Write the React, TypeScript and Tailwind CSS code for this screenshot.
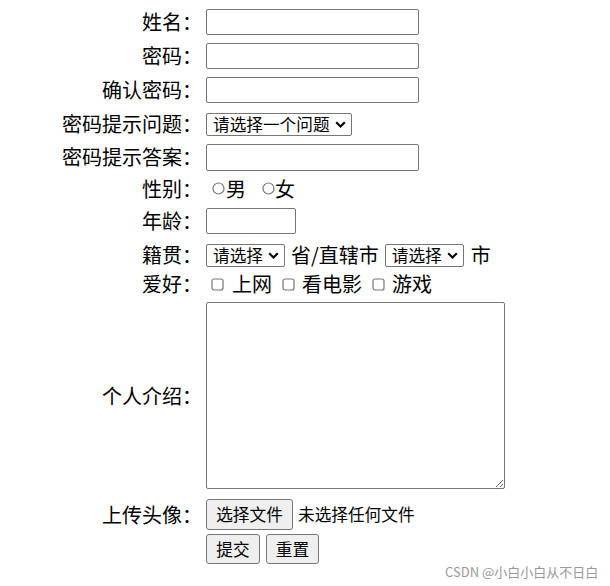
import React from "react";

function Chevron() {
  return (
    <svg width="11" height="7" viewBox="0 0 11 7" className="shrink-0">
      <path d="M1.2 1.2 L5.5 5.5 L9.8 1.2" fill="none" stroke="#000" strokeWidth="2.1" />
    </svg>
  );
}

function FakeSelect({ text }: { text: string }) {
  return (
    <div className="inline-flex h-[23px] items-center gap-[5px] rounded-[2px] border border-[#767676] bg-white pl-[6px] pr-[5px] text-[16.67px] leading-none">
      <span>{text}</span>
      <Chevron />
    </div>
  );
}

function Label({ children }: { children?: React.ReactNode }) {
  return (
    <div className="w-[202px] shrink-0 text-right text-[20px] leading-[26px]">
      {children}
    </div>
  );
}

function Radio() {
  return (
    <svg width="13" height="13" viewBox="0 0 13 13" className="block shrink-0">
      <circle cx="6.5" cy="6.5" r="5.5" fill="#fff" stroke="#767676" strokeWidth="1.2" />
    </svg>
  );
}

function Check() {
  return (
    <svg width="13" height="13" viewBox="0 0 13 13" className="block shrink-0">
      <rect x="1" y="1" width="11" height="11" rx="2" fill="#fff" stroke="#767676" strokeWidth="1.2" />
    </svg>
  );
}

const inputCls =
  "h-[26px] rounded-[2px] border border-[#767676] bg-white outline-none";

export default function App() {
  return (
    <div className="relative h-[586px] w-[610px] overflow-hidden bg-white font-['Noto_Sans_CJK_SC','Microsoft_YaHei',sans-serif] text-black">
      <div className="flex flex-col pt-[5px]">
        <div className="flex h-[34px] items-center">
          <Label>姓名：</Label>
          <input className={`ml-[4px] w-[213px] ${inputCls}`} />
        </div>
        <div className="flex h-[34px] items-center">
          <Label>密码：</Label>
          <input type="password" className={`ml-[4px] w-[213px] ${inputCls}`} />
        </div>
        <div className="flex h-[34px] items-center">
          <Label>确认密码：</Label>
          <input type="password" className={`ml-[4px] w-[213px] ${inputCls}`} />
        </div>
        <div className="flex h-[34px] items-center">
          <Label>密码提示问题：</Label>
          <div className="ml-[4px] flex">
            <FakeSelect text="请选择一个问题" />
          </div>
        </div>
        <div className="flex h-[32px] items-center">
          <Label>密码提示答案：</Label>
          <input className="ml-[4px] h-[27px] w-[213px] rounded-[2px] border border-[#767676] bg-white outline-none" />
        </div>
        <div className="flex h-[31px] items-center">
          <Label>性别：</Label>
          <div className="ml-[4px] flex items-center text-[20px] leading-[26px]">
            <div className="ml-[6px]">
              <Radio />
            </div>
            <span className="ml-[1px]">男</span>
            <div className="ml-[16px]">
              <Radio />
            </div>
            <span>女</span>
          </div>
        </div>
        <div className="flex h-[34px] items-center">
          <Label>年龄：</Label>
          <input className={`ml-[4px] w-[90px] ${inputCls}`} />
        </div>
        <div className="flex h-[34px] items-center">
          <Label>籍贯：</Label>
          <div className="ml-[4px] flex items-center text-[20px] leading-[26px]">
            <FakeSelect text="请选择" />
            <span className="ml-[6px]">省/直辖市</span>
            <span className="ml-[6px] flex">
              <FakeSelect text="请选择" />
            </span>
            <span className="ml-[7px]">市</span>
          </div>
        </div>
        <div className="flex h-[24px] items-center">
          <Label>爱好：</Label>
          <div className="ml-[4px] flex items-center text-[20px] leading-[26px]">
            <div className="ml-[5px]">
              <Check />
            </div>
            <span className="ml-[8px]">上网</span>
            <div className="ml-[10px]">
              <Check />
            </div>
            <span className="ml-[7px]">看电影</span>
            <div className="ml-[10px]">
              <Check />
            </div>
            <span className="ml-[7px]">游戏</span>
          </div>
        </div>
        <div className="flex items-center pt-[6px] pb-[3px]">
          <Label>个人介绍：</Label>
          <textarea className="ml-[4px] h-[187px] w-[299px] resize rounded-[2px] border border-[#767676] bg-white outline-none" />
        </div>
        <div className="mt-[7px] flex h-[31px] items-center">
          <Label>上传头像：</Label>
          <div className="ml-[4px] flex items-center">
            <div className="flex h-[31px] w-[87px] items-center justify-center rounded-[3px] border border-[#767676] bg-[#efefef] text-[16.67px] leading-none">
              选择文件
            </div>
            <span className="ml-[5px] text-[16.67px] leading-none">未选择任何文件</span>
          </div>
        </div>
        <div className="mt-[4px] flex h-[30px] items-center">
          <Label />
          <div className="ml-[4px] flex items-center">
            <div className="flex h-[30px] w-[54px] items-center justify-center rounded-[3px] border border-[#767676] bg-[#efefef] text-[16.67px] leading-none">
              提交
            </div>
            <div className="ml-[6px] flex h-[30px] w-[53px] items-center justify-center rounded-[3px] border border-[#767676] bg-[#efefef] text-[16.67px] leading-none">
              重置
            </div>
          </div>
        </div>
      </div>
      <div className="absolute left-[445px] top-[562px] whitespace-nowrap text-[13px] leading-[19px] text-[#999999]">
        CSDN @小白小白从不日白
      </div>
    </div>
  );
}
